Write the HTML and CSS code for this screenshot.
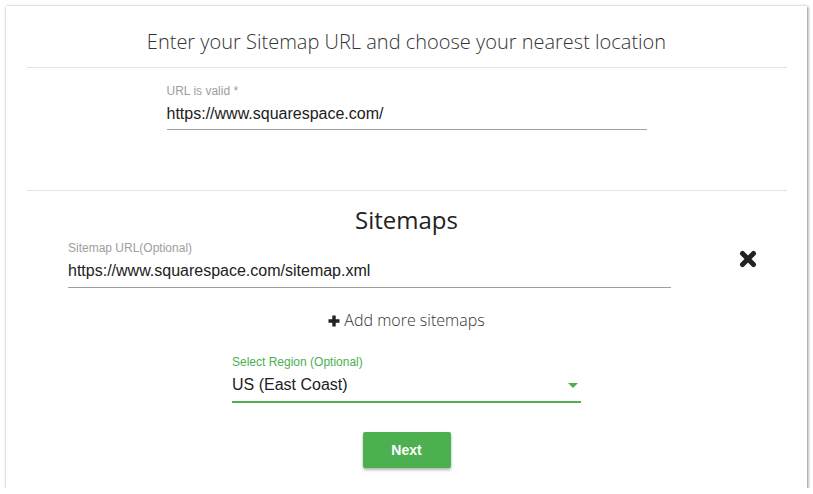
FILE: index.html
```html
<!DOCTYPE html>
<html lang="en">
<head>
<meta charset="utf-8">
<title>Sitemap</title>
<link rel="stylesheet" href="styles.css">
</head>
<body>
<div class="card">
  <h1 class="title">Enter your Sitemap URL and choose your nearest location</h1>
  <hr class="divider">
  <div class="field field-url">
    <label class="field-label">URL is valid *</label>
    <div class="field-input">https://www.squarespace.com/</div>
  </div>
  <hr class="divider divider-2">
  <h2 class="subtitle">Sitemaps</h2>
  <div class="sitemap-row">
    <div class="field field-sitemap">
      <label class="field-label">Sitemap URL(Optional)</label>
      <div class="field-input">https://www.squarespace.com/sitemap.xml</div>
    </div>
    <button class="remove-btn" type="button" aria-label="Remove">
      <svg width="20" height="20" viewBox="0 0 20 20"><path d="M4.5 4.5 L15.5 15.5 M15.5 4.5 L4.5 15.5" stroke="#222" stroke-width="5" stroke-linecap="round" fill="none"/></svg>
    </button>
  </div>
  <div class="add-more">
    <svg class="plus" width="12" height="12" viewBox="0 0 12 12"><path d="M6 0.5 V11.5 M0.5 6 H11.5" stroke="#222" stroke-width="3.4" fill="none"/></svg>
    <span>Add more sitemaps</span>
  </div>
  <div class="field field-select">
    <label class="field-label field-label-active">Select Region (Optional)</label>
    <div class="field-input select-input">
      <span>US (East Coast)</span>
      <span class="caret"></span>
    </div>
  </div>
  <div class="actions">
    <button class="next-btn" type="button">Next</button>
  </div>
</div>
</body>
</html>
```

FILE: styles.css
```css
html, body {
  margin: 0;
  padding: 0;
  background: #ffffff;
}

.card {
  box-sizing: border-box;
  margin: 6px 0 0 6px;
  width: 801px;
  height: 482px;
  background: #fff;
  box-shadow: 1px 1px 3px rgba(0, 0, 0, 0.45), 0 0 2px rgba(0, 0, 0, 0.12);
  padding-top: 22px;
  display: flex;
  flex-direction: column;
}

.title {
  margin: 0;
  font-family: "Open Sans", sans-serif;
  font-weight: 300;
  font-size: 20px;
  line-height: 28px;
  color: #333;
  text-align: center;
}

.divider {
  border: 0;
  height: 1px;
  background: #e3e3e3;
  margin: 11px 20px 0 21px;
}

.divider-2 {
  margin-top: 60px;
}

.field {
  display: flex;
  flex-direction: column;
  font-family: "Liberation Sans", Arial, sans-serif;
}

.field-label {
  font-size: 12px;
  line-height: 14px;
  color: #9e9e9e;
}

.field-label-active {
  color: #4caf50;
}

.field-input {
  margin-top: 6px;
  font-size: 16px;
  line-height: 20px;
  color: #212121;
  padding-bottom: 5px;
  border-bottom: 1px solid #9e9e9e;
}

.field-url {
  width: 480px;
  align-self: center;
  margin-top: 16px;
}

.subtitle {
  margin: 13px 0 0;
  font-family: "Open Sans", sans-serif;
  font-weight: 400;
  font-size: 24px;
  line-height: 32px;
  color: #222;
  text-align: center;
}

.sitemap-row {
  display: flex;
  align-items: flex-start;
  margin: 5px 0 0 62px;
}

.field-sitemap {
  width: 603px;
}

.field-sitemap .field-input {
  padding-bottom: 6px;
}

.remove-btn {
  margin: 8px 0 0 67px;
  padding: 0;
  border: 0;
  background: none;
  width: 20px;
  height: 20px;
  display: flex;
}

.add-more {
  margin-top: 21px;
  display: flex;
  align-items: center;
  justify-content: center;
  gap: 4px;
  font-family: "Open Sans", sans-serif;
  font-weight: 300;
  font-size: 16px;
  line-height: 22px;
  color: #333;
}

.plus {
  margin-top: 1px;
}

.field-select {
  width: 349px;
  align-self: center;
  margin-top: 24px;
}

.select-input {
  display: flex;
  align-items: center;
  padding-bottom: 6px;
  border-bottom: 2px solid #4caf50;
}

.caret {
  margin-left: auto;
  margin-right: 3px;
  width: 0;
  height: 0;
  border-left: 5px solid transparent;
  border-right: 5px solid transparent;
  border-top: 5px solid #4caf50;
}

.actions {
  display: flex;
  justify-content: center;
  margin-top: 29px;
}

.next-btn {
  width: 88px;
  height: 36px;
  border: 0;
  border-radius: 2px;
  background: #4caf50;
  color: #fff;
  font-family: "Liberation Sans", Arial, sans-serif;
  font-weight: 700;
  font-size: 14px;
  box-shadow: 0 2px 3px rgba(0, 0, 0, 0.3);
  padding: 0;
}
```
